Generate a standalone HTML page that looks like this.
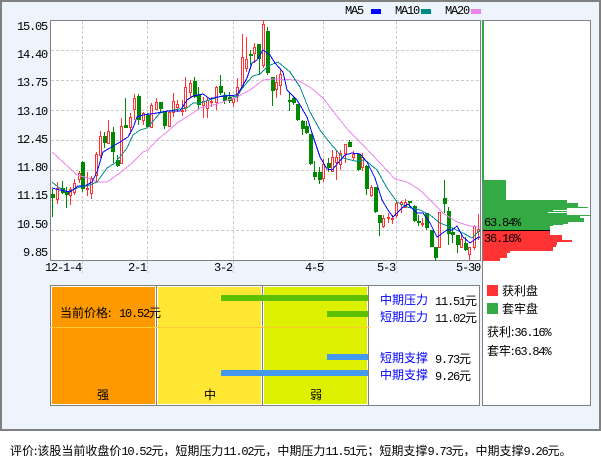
<!DOCTYPE html>
<html><head><meta charset="utf-8">
<style>
html,body{margin:0;padding:0;background:#fff}
#r{position:relative;width:601px;height:456px;overflow:hidden;background:#fff;font:12px/12px "WenQuanYi Zen Hei","Noto Sans CJK SC",sans-serif;color:#000}
#r div{position:absolute;white-space:nowrap}
.n{font-family:"Liberation Mono",monospace;letter-spacing:-1.2px}
.b{color:#00f}
</style></head><body><div id="r">
<div style="left:0;top:0;width:597px;height:427px;border:2px solid #808080;background:#edf4fc"></div>
<svg style="position:absolute;left:0;top:0" width="601" height="456" viewBox="0 0 601 456">
<rect x="50.5" y="20.5" width="430" height="240" fill="#fff" stroke="#808080"/>
<rect x="482.5" y="20.5" width="108" height="385" fill="#fff" stroke="#808080"/>
<rect x="482" y="21" width="2" height="160" fill="#33aa44"/>
<path d="M51 50.5H480M51 80.5H480M51 110.5H480M51 140.5H480M51 170.5H480M51 200.5H480M51 230.5H480M82.5 21V273M147.5 21V273M233.5 21V273M323.5 21V273M396.5 21V273" stroke="#ccc" stroke-dasharray="3 2" fill="none"/>
<g shape-rendering="crispEdges">
<path fill="none" stroke="#080" d="M52.5 189V217M62.5 181V194M66.5 187V208M82.5 161V192M104.5 132V148M113.5 127V163M117.5 155V167M125.5 98V128M138.5 94V125M147.5 113V128M160.5 102V113M164.5 112V129M194.5 77V98M198.5 87V110M220.5 75V95M224.5 92V104M229.5 92V103M250.5 50V65M259.5 44V75M267.5 27V75M272.5 77V106M289.5 92V111M293.5 96V105M297.5 104V121M302.5 120V135M306.5 121V134M310.5 134V165M314.5 161V180M319.5 167V184M328.5 158V172M349.5 140V147M358.5 153V171M366.5 165V195M375.5 187V213M379.5 215V236M409.5 201V208M414.5 205V222M418.5 215V226M426.5 213V230M431.5 230V247M435.5 247V261M444.5 180V213M448.5 207V245M452.5 228V243M457.5 235V253M465.5 237V251"/>
<path fill="#080" d="M51 194h4v4h-4zM61 188h4v5h-4zM65 192h4v3h-4zM81 162h4v27h-4zM103 136h4v7h-4zM111 132h4v20h-4zM116 160h4v6h-4zM124 125h4v3h-4zM137 96h4v24h-4zM146 115h4v12h-4zM159 102h4v7h-4zM163 112h4v14h-4zM193 81h4v16h-4zM197 95h4v10h-4zM219 86h4v7h-4zM223 96h4v5h-4zM228 97h4v4h-4zM249 54h4v2h-4zM257 44h4v15h-4zM266 31h4v42h-4zM271 77h4v14h-4zM288 100h4v2h-4zM292 98h4v5h-4zM296 104h4v16h-4zM301 121h4v8h-4zM305 126h4v7h-4zM309 134h4v30h-4zM313 172h4v5h-4zM318 172h4v8h-4zM327 163h4v5h-4zM348 142h4v5h-4zM357 154h4v16h-4zM365 166h4v23h-4zM374 187h4v25h-4zM378 215h4v8h-4zM408 201h4v2h-4zM413 206h4v15h-4zM417 221h4v2h-4zM425 213h4v15h-4zM430 230h4v17h-4zM434 247h4v11h-4zM443 198h4v6h-4zM447 211h4v23h-4zM451 232h4v3h-4zM456 235h4v10h-4zM464 243h4v7h-4z"/>
<path fill="none" stroke="#f33" d="M57.5 182V204M70.5 187V205M74.5 179V195M79.5 171V183M87.5 172V196M91.5 176V199M96.5 152V183M100.5 131V158M108.5 120V144M121.5 118V163M130.5 113V134M134.5 94V120M143.5 112V125M151.5 103V128M156.5 98V110M169.5 110V127M173.5 93V117M177.5 100V112M182.5 100V116M185.5 77V112M190.5 80V97M203.5 97V118M207.5 97V118M211.5 97V107M216.5 86V110M233.5 97V107M237.5 78V102M242.5 34V88M246.5 37V72M254.5 43V63M263.5 20V68M276.5 75V98M280.5 69V95M323.5 159V182M332.5 150V172M336.5 150V180M340.5 150V170M345.5 144V163M353.5 151V160M362.5 153V171M371.5 185V197M383.5 215V228M388.5 213V223M392.5 215V224M396.5 200V218M401.5 201V213M405.5 199V208M422.5 218V227M439.5 212V247M461.5 234V247M469.5 247V260M474.5 225V250M478.5 214V240"/>
<path fill="#fff" stroke="#f33" d="M56.500 188.500h2V199.500h-2zM69.500 189.500h2V195.500h-2zM73.500 183.500h2V192.500h-2zM78.500 173.500h2V179.500h-2zM86.500 188.500h2V189.500h-2zM90.500 178.500h2V193.500h-2zM95.500 154.500h2V175.500h-2zM99.500 136.500h2V155.500h-2zM107.500 131.500h2V143.500h-2zM120.500 126.500h2V163.500h-2zM129.500 117.500h2V127.500h-2zM133.500 98.500h2V109.500h-2zM142.500 113.500h2V120.500h-2zM150.500 105.500h2V127.500h-2zM155.500 102.500h2V109.500h-2zM168.500 112.500h2V126.500h-2zM172.500 101.500h2V112.500h-2zM176.500 104.500h2V107.500h-2zM181.500 110.500h2V111.500h-2zM184.500 87.500h2V107.500h-2zM189.500 83.500h2V92.500h-2zM202.500 101.500h2V105.500h-2zM206.500 100.500h2V108.500h-2zM210.500 101.500h2V102.500h-2zM215.500 87.500h2V102.500h-2zM232.500 98.500h2V102.500h-2zM236.500 87.500h2V96.500h-2zM241.500 57.500h2V87.500h-2zM245.500 59.500h2V68.500h-2zM253.500 47.500h2V53.500h-2zM262.500 24.500h2V65.500h-2zM275.500 82.500h2V89.500h-2zM279.500 74.500h2V85.500h-2zM322.500 164.500h2V178.500h-2zM331.500 157.500h2V171.500h-2zM335.500 157.500h2V162.500h-2zM339.500 153.500h2V164.500h-2zM344.500 144.500h2V153.500h-2zM352.500 154.500h2V157.500h-2zM361.500 157.500h2V167.500h-2zM370.500 187.500h2V195.500h-2zM382.500 218.500h2V226.500h-2zM387.500 217.500h2V218.500h-2zM391.500 218.500h2V219.500h-2zM395.500 203.500h2V215.500h-2zM400.500 202.500h2V204.500h-2zM404.500 202.500h2V207.500h-2zM421.500 223.500h2V224.500h-2zM438.500 212.500h2V247.500h-2zM460.500 239.500h2V247.500h-2zM468.500 247.500h2V254.500h-2zM473.500 226.500h2V247.500h-2zM477.500 229.500h2V231.500h-2z"/>
<polyline fill="none" stroke="#ee82ee" points="52,152 63,162 77,175 88,178 97,182 107,182 120,173 132,163 143,152 148,150 157,140 167,132 177,123 190,115 200,108 217,104 237,97 250,90 263,80 272,79 297,80 310,87 323,98 340,120 348,130 363,145 380,163 395,179 407,182 420,190 430,200 443,213 457,222 470,226 480,227"/>
<polyline fill="none" stroke="#008b8b" points="52,182 58,187 67,192 80,187 90,185 97,182 107,168 115,163 127,148 133,135 140,130 147,128 160,113 173,110 187,108 193,103 200,103 225,95 237,97 243,87 253,76 260,74 268,66 278,62 290,72 300,87 310,112 320,130 330,143 343,158 355,161 365,160 377,170 387,188 397,202 407,207 420,210 430,215 440,223 450,227 463,233 472,238 480,230"/>
<polyline fill="none" stroke="#00f" points="52,188 60,190 70,192 78,186 85,186 92,182 97,172 103,152 110,148 120,142 128,137 133,128 137,117 143,115 157,113 167,111 180,111 187,100 193,96 203,94 210,99 217,97 225,96 237,95 242,87 247,78 252,63 257,60 263,50 270,55 275,63 283,72 287,90 297,100 307,117 312,133 320,157 327,169 332,170 338,163 345,155 352,153 360,154 367,162 375,178 382,200 388,210 393,217 402,208 408,204 417,213 423,213 430,223 437,237 447,230 452,230 457,226 463,237 470,243 477,238 480,237"/>
<path fill="#33aa44" d="M483 180H506V200H567V203H578V207H588V208H567V210H553V211H567V212H548V213H567V215H590V216H580V218H584V222H568V224H563V225H553V226H550V230H483Z"/>
<path fill="#f33" d="M483 231H550V235H562V240H572V242H557V245H556V247H553V251H510V253H507V258H500V261H483Z"/>
<rect x="483" y="230" width="67" height="1" fill="#000"/>
<rect x="371" y="9" width="10" height="5" fill="#00f"/>
<rect x="421" y="9" width="10" height="5" fill="#008b8b"/>
<rect x="471" y="9" width="10" height="5" fill="#ee82ee"/>
<rect x="50.500" y="285.500" width="429" height="120" fill="#fff" stroke="#808080"/>
<rect x="52" y="287" width="103" height="117" fill="#f90"/>
<rect x="158" y="287" width="103" height="117" fill="#ffe733"/>
<rect x="264" y="287" width="103" height="117" fill="#dcf000"/>
<rect x="156" y="286" width="1" height="119" fill="#808080"/>
<rect x="262" y="286" width="1" height="119" fill="#808080"/>
<rect x="368" y="286" width="1" height="119" fill="#808080"/>
<rect x="50" y="327" width="320" height="1" fill="#fc3"/>
<rect x="221" y="295" width="147" height="6" fill="#5cbf00"/>
<rect x="327" y="311" width="41" height="6" fill="#5cbf00"/>
<rect x="327" y="354" width="41" height="6" fill="#4499ee"/>
<rect x="221" y="370" width="147" height="6" fill="#4499ee"/>
<rect x="487" y="285" width="11" height="11" fill="#f33"/>
<rect x="487" y="303" width="11" height="11" fill="#33aa44"/>
</g>
</svg>
<div class="n" style="left:345px;top:5px">MA5</div>
<div class="n" style="left:395px;top:5px">MA10</div>
<div class="n" style="left:445px;top:5px">MA20</div>
<div class="n" style="left:17px;top:21px">15.05</div>
<div class="n" style="left:17px;top:49px">14.40</div>
<div class="n" style="left:17px;top:77px">13.75</div>
<div class="n" style="left:17px;top:106px">13.10</div>
<div class="n" style="left:17px;top:134px">12.45</div>
<div class="n" style="left:17px;top:162px">11.80</div>
<div class="n" style="left:17px;top:190px">11.15</div>
<div class="n" style="left:17px;top:219px">10.50</div>
<div class="n" style="left:23px;top:247px">9.85</div>
<div class="n" style="left:45px;top:262px">12-1-4</div>
<div class="n" style="left:128px;top:262px">2-1</div>
<div class="n" style="left:214px;top:262px">3-2</div>
<div class="n" style="left:305px;top:262px">4-5</div>
<div class="n" style="left:377px;top:262px">5-3</div>
<div class="n" style="left:456px;top:262px">5-30</div>
<div class="n" style="left:484px;top:217px">63.84%</div>
<div class="n" style="left:484px;top:233px">36.16%</div>
<div style="left:60px;top:307px">当前价格:</div>
<div style="left:119px;top:307px"><span class="n">10.52</span>元</div>
<div style="left:97px;top:389px">强</div>
<div style="left:204px;top:389px">中</div>
<div style="left:310px;top:389px">弱</div>
<div class="b" style="left:380px;top:294px">中期压力</div>
<div class="b" style="left:380px;top:311px">短期压力</div>
<div class="b" style="left:380px;top:352px">短期支撑</div>
<div class="b" style="left:380px;top:369px">中期支撑</div>
<div style="left:435px;top:295px"><span class="n">11.51</span>元</div>
<div style="left:435px;top:312px"><span class="n">11.02</span>元</div>
<div style="left:435px;top:353px"><span class="n">9.73</span>元</div>
<div style="left:435px;top:370px"><span class="n">9.26</span>元</div>
<div style="left:502px;top:285px">获利盘</div>
<div style="left:502px;top:303px">套牢盘</div>
<div style="left:487px;top:326px">获利:<span class="n">36.16%</span></div>
<div style="left:487px;top:345px">套牢:<span class="n">63.84%</span></div>
<div style="left:10px;top:445px">评价:该股当前收盘价<span class="n">10.52</span>元，短期压力<span class="n">11.02</span>元，中期压力<span class="n">11.51</span>元；短期支撑<span class="n">9.73</span>元，中期支撑<span class="n">9.26</span>元。</div>
</div></body></html>
